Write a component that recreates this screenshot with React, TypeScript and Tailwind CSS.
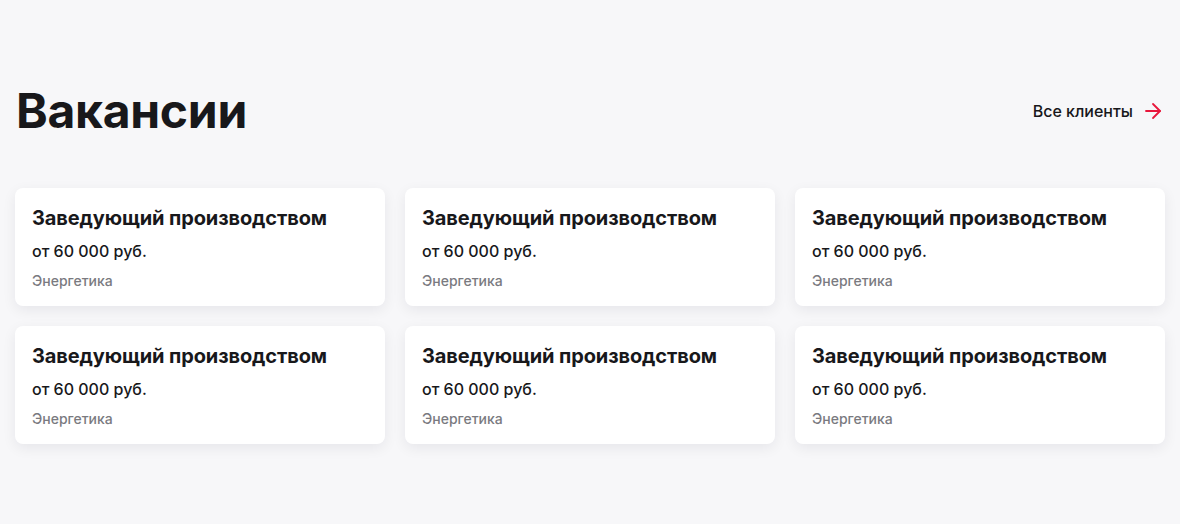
import { ArrowRight } from "lucide-react";

const vacancies = Array.from({ length: 6 }, () => ({
  title: "Заведующий производством",
  salary: "от 60 000 руб.",
  area: "Энергетика",
}));

function VacancyCard({ title, salary, area }: { title: string; salary: string; area: string }) {
  return (
    <div className="h-[118px] rounded-lg bg-white px-[17px] pt-[16px] shadow-[0_4px_14px_rgba(20,20,40,0.07)]">
      <div className="text-[20px] font-bold leading-[28px] tracking-[-0.1px] text-[#18181b]">{title}</div>
      <div className="mt-[8px] text-[16px] font-medium leading-[22px] text-[#18181b]">{salary}</div>
      <div className="mt-[9px] text-[14px] font-medium leading-[20px] text-[#7a7a80]">{area}</div>
    </div>
  );
}

export default function App() {
  return (
    <div className="min-h-[524px] bg-[#f7f7f9] px-[15px] pt-[80px] font-['Inter',sans-serif]">
      <div className="flex items-center justify-between">
        <h1 className="pl-px text-[48px] font-bold leading-[62px] tracking-[-0.3px] text-[#18181b]">Вакансии</h1>
        <a href="#" className="flex items-center gap-[8px] text-[16px] font-medium text-[#18181b]">
          Все клиенты
          <ArrowRight className="h-6 w-6 text-[#e8173c]" strokeWidth={1.8} />
        </a>
      </div>
      <div className="mt-[46px] grid grid-cols-3 gap-5">
        {vacancies.map((v, i) => (
          <VacancyCard key={i} {...v} />
        ))}
      </div>
    </div>
  );
}
